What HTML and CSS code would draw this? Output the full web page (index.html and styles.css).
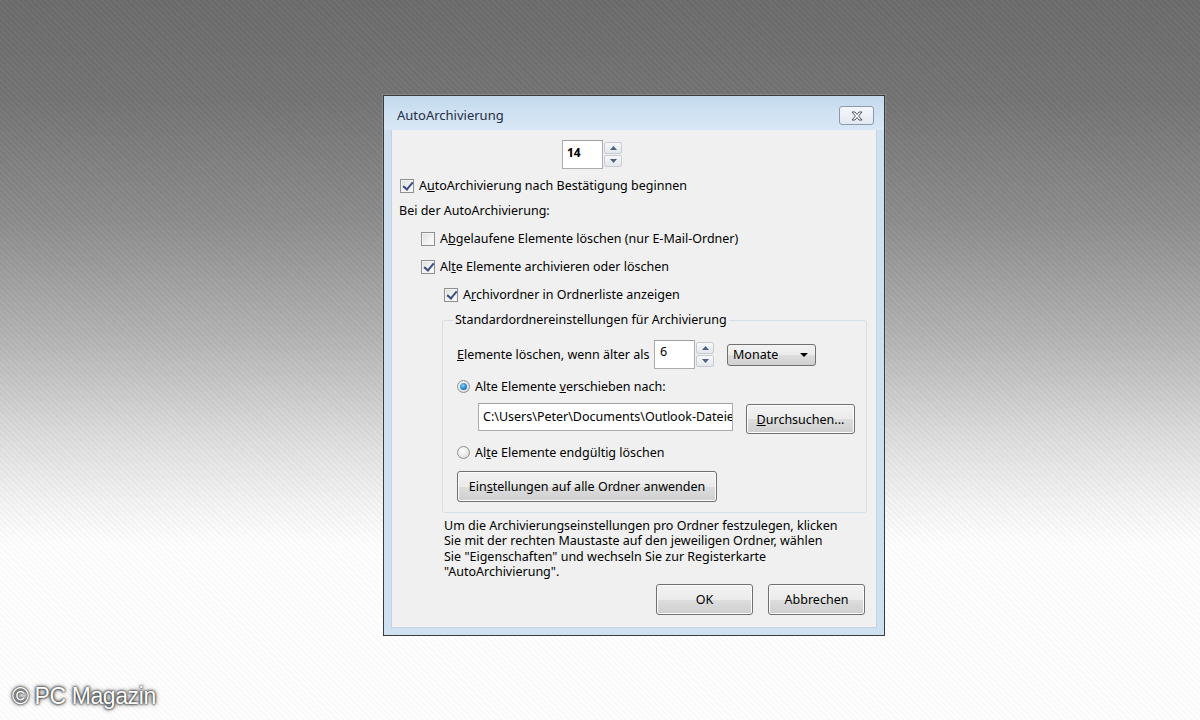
FILE: index.html
```html
<!DOCTYPE html>
<html lang="de">
<head>
<meta charset="utf-8">
<title>AutoArchivierung</title>
<link rel="stylesheet" href="styles.css">
</head>
<body>
<div class="desktop">
  <div class="dialog">
    <div class="titlebar">
      <span class="title">AutoArchivierung</span>
      <button class="close" aria-label="Schließen">
        <svg width="14" height="10" viewBox="0 0 14 10"><path d="M2 1 L5 1 L7 3.5 L9 1 L12 1 L8.6 5 L12 9 L9 9 L7 6.5 L5 9 L2 9 L5.4 5 Z" fill="#fff" stroke="#4d5566" stroke-width="1" stroke-linejoin="round"/></svg>
      </button>
    </div>
    <div class="content">
      <div class="row spin-row">
        <div class="spinner">
          <div class="field num">14</div>
          <div class="spin">
            <span class="sb up"><svg width="7" height="4" viewBox="0 0 7 4"><path d="M0 4 L3.5 0 L7 4Z" fill="#4d6185"/></svg></span>
            <span class="sb down"><svg width="7" height="4" viewBox="0 0 7 4"><path d="M0 0 L3.5 4 L7 0Z" fill="#4d6185"/></svg></span>
          </div>
        </div>
      </div>

      <label class="row check r1"><span class="cb on"></span><span>A<u>u</u>toArchivierung nach Bestätigung beginnen</span></label>
      <div class="row plain r2">Bei der AutoArchivierung:</div>
      <label class="row check r3 ind1"><span class="cb"></span><span>A<u>b</u>gelaufene Elemente löschen (nur E-Mail-Ordner)</span></label>
      <label class="row check r4 ind1"><span class="cb on"></span><span>Al<u>t</u>e Elemente archivieren oder löschen</span></label>
      <label class="row check r5 ind2"><span class="cb on"></span><span>A<u>r</u>chivordner in Ordnerliste anzeigen</span></label>

      <fieldset class="group">
        <legend>Standardordnereinstellungen für Archivierung</legend>
        <div class="g-row age">
          <span class="age-label"><u>E</u>lemente löschen, wenn älter als</span>
          <div class="spinner">
            <div class="field num six">6</div>
            <div class="spin tall">
              <span class="sb up"><svg width="7" height="4" viewBox="0 0 7 4"><path d="M0 4 L3.5 0 L7 4Z" fill="#4d6185"/></svg></span>
              <span class="sb down"><svg width="7" height="4" viewBox="0 0 7 4"><path d="M0 0 L3.5 4 L7 0Z" fill="#4d6185"/></svg></span>
            </div>
          </div>
          <div class="combo"><span>Monate</span><svg width="8" height="4" viewBox="0 0 8 4"><path d="M0 0 L8 0 L4 4Z" fill="#000"/></svg></div>
        </div>
        <label class="g-row radio-row r-move"><span class="rb on"></span><span>Alte Elemente <u>v</u>erschieben nach:</span></label>
        <div class="g-row path-row">
          <div class="field path">C:\Users\Peter\Documents\Outlook-Dateie</div>
          <button class="btn browse"><u>D</u>urchsuchen...</button>
        </div>
        <label class="g-row radio-row r-del"><span class="rb"></span><span>Al<u>t</u>e Elemente endgültig löschen</span></label>
        <div class="g-row apply-row">
          <button class="btn apply">Ein<u>s</u>tellungen auf alle Ordner anwenden</button>
        </div>
      </fieldset>

      <p class="info">Um die Archivierungseinstellungen pro Ordner festzulegen, klicken<br>Sie mit der rechten Maustaste auf den jeweiligen Ordner, wählen<br>Sie "Eigenschaften" und wechseln Sie zur Registerkarte<br>"AutoArchivierung".</p>

      <div class="actions">
        <button class="btn ok">OK</button>
        <button class="btn cancel">Abbrechen</button>
      </div>
    </div>
  </div>
  <div class="watermark">© PC Magazin</div>
</div>
</body>
</html>
```

FILE: styles.css
```css
* { box-sizing: border-box; }

html, body {
  margin: 0;
  padding: 0;
}

body {
  width: 1200px;
  height: 720px;
  overflow: hidden;
  font-family: "Noto Sans", "Open Sans", sans-serif;
  font-size: 12.5px;
  color: #000;
}

.desktop {
  position: relative;
  width: 1200px;
  height: 720px;
  padding: 95px 0 0 383px;
  background:
    repeating-linear-gradient(45deg, rgba(255,255,255,0.025) 0 2px, rgba(0,0,0,0.025) 2px 4px),
    linear-gradient(180deg, #6c6c6c 0px, #747474 100px, #8c8c8c 220px, #b4b4b4 340px, #dadada 430px, #f3f3f3 500px, #ffffff 545px, #ffffff 720px);
}

.dialog {
  width: 502px;
  height: 541px;
  border: 1px solid #3a3a3a;
  background: #cfe0f1;
  display: flex;
  flex-direction: column;
  box-shadow: 0 0 0 1px rgba(255,255,255,0.15);
}

.titlebar {
  height: 34px;
  display: flex;
  align-items: center;
  justify-content: space-between;
  padding: 0 10px 0 13px;
  background: linear-gradient(180deg, #c4d9ee 0%, #d2e3f3 60%, #d8e7f5 100%);
}

.title {
  font-size: 13px;
  color: #1f2d45;
  margin-top: 4px;
}

.close {
  width: 35px;
  height: 19px;
  margin-top: 5px;
  border: 1px solid #8e9aaa;
  border-radius: 3px;
  background: linear-gradient(180deg, #f4f7fb 0%, #e2e9f2 100%);
  display: flex;
  align-items: center;
  justify-content: center;
  padding: 0;
}

.content {
  flex: 1;
  margin: 0 7px 7px 7px;
  background: #f0f0f0;
  padding: 0 11px 0 0;
  display: flex;
  flex-direction: column;
  border: 1px solid #c2d3e4;
  border-top: none;
}

.row {
  display: flex;
  align-items: center;
  height: 20px;
  line-height: 20px;
}

.spin-row {
  height: 29px;
  margin-top: 10px;
  padding-left: 170px;
}

.spinner {
  display: flex;
  align-items: stretch;
  height: 29px;
}

.field {
  background: #fff;
  border: 1px solid #acacac;
  border-top-color: #a0a0a0;
}

.num {
  width: 41px;
  font-weight: bold;
  font-size: 12px;
  padding: 5px 0 0 4px;
  line-height: 14px;
}

.num.six {
  font-weight: normal;
  font-size: 12.5px;
  padding-left: 5px;
  padding-top: 4px;
}

.spin {
  width: 18px;
  margin-left: 1px;
  display: flex;
  flex-direction: column;
  gap: 1px;
  padding: 2px 0;
}

.sb {
  flex: 1;
  display: flex;
  align-items: center;
  justify-content: center;
  border: 1px solid #c7ccd4;
  background: linear-gradient(180deg, #f7f8fa, #e4e7ec);
  border-radius: 2px;
}

.check, .radio-row {
  gap: 5px;
}

.r1 { margin-top: 7px; padding-left: 8px; }
.r2 { margin-top: 5px; padding-left: 7px; }
.r3 { margin-top: 8px; }
.r4 { margin-top: 8px; }
.r5 { margin-top: 8px; }
.ind1 { padding-left: 29px; }
.ind2 { padding-left: 52px; }

.cb {
  width: 14px;
  height: 14px;
  flex: none;
  border: 1px solid #8e8f8f;
  background: linear-gradient(135deg, #dcdcdc 0%, #f4f4f4 60%, #fbfbfb 100%);
  box-shadow: inset 0 0 0 1px #f4f4f4;
  position: relative;
}

.cb.on::after {
  content: "";
  position: absolute;
  left: 4px;
  top: 0px;
  width: 4px;
  height: 8px;
  border-right: 2px solid #3a4f84;
  border-bottom: 2px solid #3a4f84;
  transform: rotate(40deg);
}

.group {
  margin: 7px 0 0 50px;
  width: 425px;
  height: 201px;
  border: 1px solid #d5dfe5;
  border-radius: 3px;
  padding: 0 0 0 14px;
  display: flex;
  flex-direction: column;
  min-width: 0;
}

.group legend {
  padding: 0 2px;
  margin-left: -4px;
  line-height: 16px;
}

.g-row {
  display: flex;
  align-items: center;
}

.age {
  margin-top: 12px;
  height: 29px;
}

.age-label {
  width: 197px;
  white-space: nowrap;
}

.combo {
  margin-left: 13px;
  width: 89px;
  height: 22px;
  border: 1px solid #707070;
  border-radius: 3px;
  background: linear-gradient(180deg, #f2f2f2 0%, #ebebeb 50%, #dddddd 51%, #cfcfcf 100%);
  display: flex;
  align-items: center;
  justify-content: space-between;
  padding: 0 7px 0 5px;
}

.radio-row {
  height: 20px;
}

.r-move { margin-top: 7px; }

.rb {
  width: 13px;
  height: 13px;
  border-radius: 50%;
  border: 1px solid #8e8f8f;
  background: radial-gradient(circle at 40% 35%, #ffffff 0%, #e6e6e6 60%, #cfcfcf 100%);
  flex: none;
  position: relative;
}

.rb.on::after {
  content: "";
  position: absolute;
  left: 2px;
  top: 2px;
  width: 7px;
  height: 7px;
  border-radius: 50%;
  background: radial-gradient(circle at 40% 35%, #8ad3ff 0%, #2a8fd2 50%, #0d4f8a 100%);
}

.path-row {
  margin-top: 7px;
  height: 31px;
  padding-left: 21px;
  align-items: flex-start;
}

.path {
  width: 255px;
  height: 28px;
  line-height: 26px;
  padding-left: 4px;
  white-space: nowrap;
  overflow: hidden;
}

.btn {
  font-family: inherit;
  font-size: 12.5px;
  color: #000;
  border: 1px solid #707070;
  border-radius: 3px;
  background: linear-gradient(180deg, #f2f2f2 0%, #ebebeb 50%, #dddddd 51%, #cfcfcf 100%);
  box-shadow: inset 0 0 0 1px #fcfcfc;
  padding: 0;
}

.browse {
  margin-left: 13px;
  margin-top: 1px;
  width: 109px;
  height: 30px;
}

.r-del { margin-top: 8px; }

.apply-row {
  margin-top: 9px;
}

.apply {
  width: 260px;
  height: 31px;
}

.info {
  margin: 5px 0 0 52px;
  line-height: 15.4px;
  white-space: nowrap;
}

.actions {
  margin-top: 4px;
  display: flex;
  justify-content: flex-end;
  gap: 15px;
}

.ok, .cancel {
  width: 97px;
  height: 31px;
}

.watermark {
  position: absolute;
  left: 12px;
  top: 683px;
  font-family: "Liberation Sans", Arial, sans-serif;
  font-size: 23px;
  color: #ffffff;
  letter-spacing: -0.4px;
  text-shadow: 0 0 2px #222, 0 0 3px #333, 0 0 5px #555;
}
```
